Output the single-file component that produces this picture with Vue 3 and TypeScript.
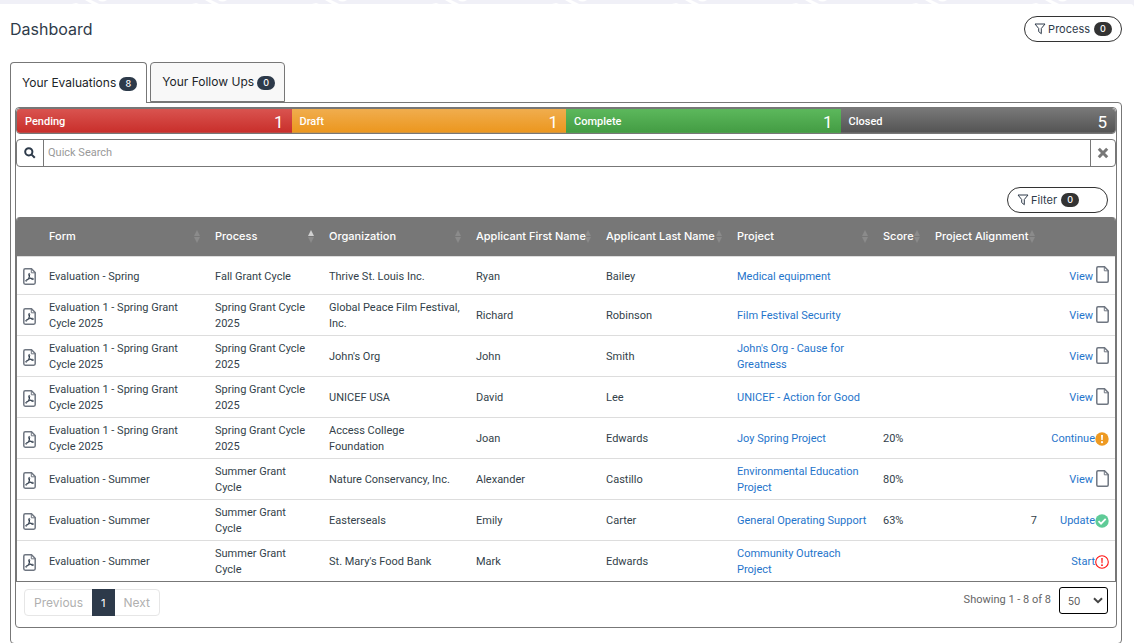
<script setup lang="ts">
import { ref } from 'vue'

type Status = 'view' | 'continue' | 'update' | 'start'

interface Row {
  form: string
  process: string
  org: string
  first: string
  last: string
  project: string
  score: string
  alignment: string
  action: string
  status: Status
}

const tabs = [
  { label: 'Your Evaluations', count: 8 },
  { label: 'Your Follow Ups', count: 0 },
]
const activeTab = ref(0)

const statuses = [
  { label: 'Pending', count: 1, tone: 'red' },
  { label: 'Draft', count: 1, tone: 'orange' },
  { label: 'Complete', count: 1, tone: 'green' },
  { label: 'Closed', count: 5, tone: 'gray' },
]

const columns = [
  { key: 'form', label: 'Form' },
  { key: 'process', label: 'Process' },
  { key: 'org', label: 'Organization' },
  { key: 'first', label: 'Applicant First Name' },
  { key: 'last', label: 'Applicant Last Name' },
  { key: 'project', label: 'Project' },
  { key: 'score', label: 'Score' },
  { key: 'alignment', label: 'Project Alignment' },
]

const spring = 'Evaluation 1 - Spring Grant Cycle 2025'
const springCycle = 'Spring Grant Cycle 2025'
const summer = 'Evaluation - Summer'
const summerCycle = 'Summer Grant Cycle'

const rows: Row[] = [
  { form: 'Evaluation - Spring', process: 'Fall Grant Cycle', org: 'Thrive St. Louis Inc.', first: 'Ryan', last: 'Bailey', project: 'Medical equipment', score: '', alignment: '', action: 'View', status: 'view' },
  { form: spring, process: springCycle, org: 'Global Peace Film Festival, Inc.', first: 'Richard', last: 'Robinson', project: 'Film Festival Security', score: '', alignment: '', action: 'View', status: 'view' },
  { form: spring, process: springCycle, org: "John's Org", first: 'John', last: 'Smith', project: "John's Org - Cause for Greatness", score: '', alignment: '', action: 'View', status: 'view' },
  { form: spring, process: springCycle, org: 'UNICEF USA', first: 'David', last: 'Lee', project: 'UNICEF - Action for Good', score: '', alignment: '', action: 'View', status: 'view' },
  { form: spring, process: springCycle, org: 'Access College Foundation', first: 'Joan', last: 'Edwards', project: 'Joy Spring Project', score: '20%', alignment: '', action: 'Continue', status: 'continue' },
  { form: summer, process: summerCycle, org: 'Nature Conservancy, Inc.', first: 'Alexander', last: 'Castillo', project: 'Environmental Education Project', score: '80%', alignment: '', action: 'View', status: 'view' },
  { form: summer, process: summerCycle, org: 'Easterseals', first: 'Emily', last: 'Carter', project: 'General Operating Support', score: '63%', alignment: '7', action: 'Update', status: 'update' },
  { form: summer, process: summerCycle, org: "St. Mary's Food Bank", first: 'Mark', last: 'Edwards', project: 'Community Outreach Project', score: '', alignment: '', action: 'Start', status: 'start' },
]

const search = ref('')
const pageSize = ref('50')
</script>

<template>
  <div class="page">
    <svg class="backdrop" aria-hidden="true">
      <defs>
        <pattern id="weave" width="120" height="4" patternUnits="userSpaceOnUse">
          <path d="M72 4l4-1 3 1zM85 0h6l8 4h-7zM98 0q4 3 9 0z" fill="#fff" />
        </pattern>
      </defs>
      <rect width="100%" height="100%" fill="url(#weave)" />
    </svg>
    <main class="card">
      <header class="head">
        <h1>Dashboard</h1>
        <button type="button" class="pill">
          <svg class="funnel" viewBox="0 0 12 12"><path d="M1 1h10L7.300 5.500v5.200L4.700 8.600V5.500z" /></svg>
          <span>Process</span><span class="count dark">0</span>
        </button>
      </header>

      <nav class="tabs">
        <button v-for="(tab, i) in tabs" :key="tab.label" type="button" class="tab" :class="{ active: activeTab === i }" @click="activeTab = i">
          {{ tab.label }}<span class="count">{{ tab.count }}</span>
        </button>
      </nav>

      <section class="panel">
        <div class="box">
          <div class="statusbar">
            <button v-for="s in statuses" :key="s.label" type="button" class="status" :class="s.tone">
              <span>{{ s.label }}</span><span class="num">{{ s.count }}</span>
            </button>
          </div>

          <div class="search">
            <button type="button" class="find" aria-label="Search">
              <svg viewBox="0 0 12 12" width="12" height="12"><circle cx="4.800" cy="4.800" r="3.600" /><path d="M7.600 7.600l3.200 3.200" /></svg>
            </button>
            <input v-model="search" type="text" placeholder="Quick Search" aria-label="Quick Search" />
            <button type="button" class="clear" aria-label="Clear">
              <svg viewBox="0 0 12 12" width="12" height="12"><path d="M1.800 1.800l8.400 8.400M10.200 1.800l-8.400 8.400" /></svg>
            </button>
          </div>

          <div class="filters">
            <button type="button" class="pill wide">
              <svg class="funnel" viewBox="0 0 12 12"><path d="M1 1h10L7.300 5.500v5.200L4.700 8.600V5.500z" /></svg>
              <span>Filter</span><span class="count dark">0</span>
            </button>
          </div>

          <table>
            <colgroup>
              <col class="c-icon" />
              <col v-for="c in columns" :key="c.key" :class="'c-' + c.key" />
              <col class="c-action" />
            </colgroup>
            <thead>
              <tr>
                <th></th>
                <th v-for="c in columns" :key="c.key">
                  <div class="th">
                    <span>{{ c.label }}</span>
                    <svg class="sort" :class="{ asc: c.key === 'process' }" viewBox="0 0 6 13"><path class="up" d="M3 0l3 6H0z" /><path d="M3 13l3-6H0z" /></svg>
                  </div>
                </th>
                <th></th>
              </tr>
            </thead>
            <tbody>
              <tr v-for="(r, i) in rows" :key="i">
                <td class="pdf">
                  <a href="#" aria-label="Open PDF">
                    <svg viewBox="0 0 13 17" width="13" height="17">
                      <path class="sheet" d="M2.200.8h6.300l3.700 3.700v10.300q0 1.400-1.400 1.400H2.200Q.8 16.200.8 14.800V2.200Q.8.8 2.200.8z" />
                      <path class="fold" d="M8.300.8v4h3.900" />
                      <path class="acro" d="M6.200 5.400c-.7 0-.6 1.300-.1 2.600.7 1.900 2.200 3.400 3.700 3.500 1.100 0 .9-1.100-.4-1.200-2-.1-5.200.8-6.400 1.900-.7.700-.3 1.300.4.900C4.900 12.300 6.600 8.900 6.700 6.500c0-.7-.1-1.100-.5-1.100z" />
                    </svg>
                  </a>
                </td>
                <td>{{ r.form }}</td>
                <td>{{ r.process }}</td>
                <td>{{ r.org }}</td>
                <td>{{ r.first }}</td>
                <td>{{ r.last }}</td>
                <td><a href="#">{{ r.project }}</a></td>
                <td>{{ r.score }}</td>
                <td class="right">{{ r.alignment }}</td>
                <td class="act">
                  <a href="#" :class="r.status">
                    <span>{{ r.action }}</span>
                    <svg v-if="r.status === 'view'" viewBox="0 0 13 17" width="13" height="17">
                      <path class="sheet" d="M2 .8h6.500l3.700 3.700v10.500q0 1.200-1.200 1.200H2Q.8 16.200.8 15V2Q.8.8 2 .8z" />
                      <path class="fold" d="M8.300.8v4h3.900" />
                    </svg>
                    <svg v-else-if="r.status === 'continue'" viewBox="0 0 14 14" width="14" height="14">
                      <circle cx="7" cy="7" r="6.700" fill="#ee9a22" /><path d="M6 3h2l-.3 5H6.300z" fill="#fff" /><circle cx="7" cy="10.200" r="1.100" fill="#fff" />
                    </svg>
                    <svg v-else-if="r.status === 'update'" viewBox="0 0 14 14" width="14" height="14">
                      <circle cx="7" cy="7" r="6.700" fill="#5fcb97" /><path d="M3.500 7.200l2.500 2.500 4.700-4.900" fill="none" stroke="#fff" stroke-width="1.800" />
                    </svg>
                    <svg v-else viewBox="0 0 14 14" width="14" height="14">
                      <circle cx="7" cy="7" r="6.300" fill="#fff" stroke="#f11" stroke-width="1.100" /><path d="M6.300 3h1.400l-.2 5.200h-1z" fill="#f11" /><circle cx="7" cy="10.200" r=".9" fill="#f11" />
                    </svg>
                  </a>
                </td>
              </tr>
            </tbody>
          </table>

          <footer class="foot">
            <nav class="pager">
              <button type="button" disabled>Previous</button>
              <button type="button" class="current">1</button>
              <button type="button" disabled>Next</button>
            </nav>
            <div class="sizer">
              <label for="size">Showing 1 - 8 of 8</label>
              <span class="select">
                <select id="size" v-model="pageSize">
                  <option>10</option>
                  <option>25</option>
                  <option>50</option>
                </select>
                <svg viewBox="0 0 10 7" width="10" height="7"><path d="M1 1.200l4 4 4-4" /></svg>
              </span>
            </div>
          </footer>
        </div>
      </section>
    </main>
  </div>
</template>

<style>
body {
  margin: 0;
  background: #f0f0f7;
}
</style>

<style scoped>
* {
  box-sizing: border-box;
}
.page {
  font: 11px/16px Roboto, sans-serif;
  color: #333f4a;
}
button,
input,
select {
  font: inherit;
  color: inherit;
  margin: 0;
}
button {
  cursor: pointer;
}
a {
  color: #1f75cb;
  text-decoration: none;
}
.backdrop {
  display: block;
  width: 100%;
  height: 4px;
}
.card {
  background: #fff;
  border-top-right-radius: 4px;
  padding: 12px 12px 0 10px;
}
.head {
  display: flex;
  justify-content: space-between;
  align-items: center;
  height: 26px;
}
h1 {
  margin: 0;
  font: 400 16px/20px Inter, sans-serif;
  color: #2f3b4a;
}
.pill {
  display: flex;
  align-items: center;
  gap: 2px;
  height: 26px;
  padding: 0 9px;
  border: 1px solid #333;
  border-radius: 13px;
  background: #fff;
  font: 11px/16px Inter, sans-serif;
  color: #2f3b4a;
}
.pill.wide {
  width: 101px;
}
.funnel {
  width: 12px;
  height: 12px;
  fill: none;
  stroke: #2f3b4a;
}
.count {
  display: inline-block;
  min-width: 18px;
  margin-left: 3px;
  border-radius: 7px;
  background: #2d3a4a;
  color: #fff;
  font: 500 9px/14px Inter, sans-serif;
  text-align: center;
}
.count.dark {
  margin-left: 2px;
  background: #333;
}
.tabs {
  display: flex;
  align-items: flex-start;
  gap: 3px;
  margin-top: 20px;
}
.tab {
  height: 40px;
  padding: 0 9px 0 11px;
  border: 1px solid #777;
  border-radius: 4px 4px 0 0;
  background: #f8f8f8;
  font: 12px/16px Inter, sans-serif;
  color: #212529;
}
.tab.active {
  height: 41px;
  margin-bottom: -1px;
  border-bottom: 0;
  background: #fff;
  position: relative;
}
.panel {
  padding: 4px 4px 15px 4px;
  border: 1px solid #777;
  border-radius: 0 4px 4px 4px;
}
.box {
  border: 1px solid #777;
  border-radius: 4px;
}
.statusbar {
  display: grid;
  grid-template-columns: repeat(4, 1fr);
  overflow: hidden;
  border: 1px solid #777;
  border-radius: 4px;
}
.status {
  display: flex;
  justify-content: space-between;
  align-items: center;
  height: 24px;
  padding: 2px 8px 0;
  border: 0;
  border-bottom: 1px solid #0002;
  color: #fff;
  font-weight: 500;
}
.num {
  font-size: 17px;
  font-weight: 400;
}
.red {
  background: linear-gradient(#d9534f, #c9302c);
}
.orange {
  background: linear-gradient(#f0ad4e, #ec971f);
}
.green {
  background: linear-gradient(#5cb85c, #449d44);
}
.gray {
  background: linear-gradient(#777, #555);
}
.search {
  display: flex;
  height: 28px;
  margin-top: 5px;
  border: 1px solid #777;
  border-radius: 4px;
}
.search button {
  display: grid;
  place-items: center;
  padding: 0;
  border: 0;
  background: none;
}
.search svg {
  fill: none;
  stroke: #2d3a4a;
  stroke-width: 2;
}
.search .find {
  width: 26px;
}
.search .clear {
  width: 24px;
}
.search .clear svg {
  stroke: #777;
  stroke-width: 3;
}
.search input {
  flex: 1;
  min-width: 0;
  padding: 0 4px;
  border: solid #777;
  border-width: 0 1px;
  outline: 0;
  background: none;
}
.search input::placeholder {
  color: #999;
}
.filters {
  display: flex;
  justify-content: flex-end;
  padding: 20px 8px 4px;
}
table {
  width: 100%;
  table-layout: fixed;
  border-collapse: separate;
  border-spacing: 0;
  border: solid #777;
  border-width: 0 1px 1px;
  border-radius: 4px 4px 0 0;
  overflow: hidden;
}
.c-icon {
  width: 24px;
}
.c-form {
  width: 166px;
}
.c-process {
  width: 114px;
}
.c-org {
  width: 147px;
}
.c-first {
  width: 130px;
}
.c-last {
  width: 131px;
}
.c-project {
  width: 146px;
}
.c-score {
  width: 52px;
}
.c-alignment {
  width: 115px;
}
.c-action {
  width: 73px;
}
th {
  height: 39px;
  padding: 0 0 1px 8px;
  background: #777;
  color: #fff;
  font: 500 11px/16px Inter, sans-serif;
  text-align: left;
}
.th {
  display: flex;
  justify-content: space-between;
  align-items: center;
  padding-right: 7px;
  white-space: nowrap;
}
.th span {
  flex: 0 1 auto;
  min-width: 0;
}
.sort {
  flex: none;
  width: 6px;
  height: 13px;
  fill: #8b8b8b;
}
.asc .up {
  fill: #d0d0d0;
}
td {
  height: 41px;
  padding: 5px 7px 3px 8px;
  border-top: 1px solid #ddd;
}
tbody tr:first-child td {
  height: 38px;
}
td.right {
  padding-right: 5px;
  text-align: right;
}
td.pdf {
  padding: 2px 0 0 6px;
}
.pdf a {
  display: flex;
}
.sheet,
.fold {
  fill: none;
  stroke: #6f7681;
  stroke-width: 1.500;
}
.fold {
  stroke-width: 1;
}
.acro {
  fill: none;
  stroke: #2d3a4a;
}
td.act {
  padding: 2px 6px 0 0;
}
.act a {
  display: flex;
  justify-content: flex-end;
  align-items: center;
}
.act .view {
  gap: 3px;
}
.view svg {
  margin-bottom: 4px;
}
.foot {
  display: flex;
  justify-content: space-between;
  align-items: flex-start;
  padding: 5px 8px 11px 8px;
}
.pager {
  display: flex;
  margin-top: 2px;
  border: 1px solid #e6e6e6;
  border-radius: 4px;
}
.pager button {
  height: 25px;
  padding: 0 9px;
  border: 0;
  background: none;
  font: 12px/16px Inter, sans-serif;
  color: #b0b0b0;
}
.pager .current {
  height: 27px;
  margin: -1px 0;
  background: #2d3a4a;
  color: #fff;
  font-size: 11px;
}
.sizer {
  display: flex;
  align-items: center;
  gap: 8px;
}
.sizer label {
  padding-bottom: 2px;
  color: #666;
}
.select {
  display: flex;
  align-items: center;
  position: relative;
}
select {
  appearance: none;
  width: 49px;
  height: 27px;
  padding: 0 8px;
  border: 1px solid #000;
  border-radius: 3px;
  background: #fff;
  font: 10px/16px Inter, sans-serif;
  color: #555;
}
.select svg {
  position: absolute;
  right: 5px;
  fill: none;
  stroke: #444;
  stroke-width: 2;
  pointer-events: none;
}
</style>
